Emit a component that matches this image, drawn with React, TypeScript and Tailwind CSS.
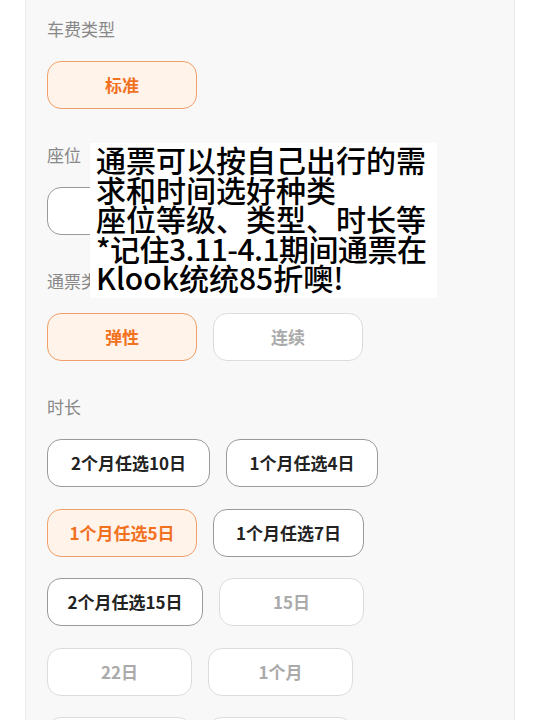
import React from "react";

type Opt = { label: string; state: "active" | "normal" | "disabled"; w: string };

const sections: { title: string; rows: Opt[][] }[] = [
  { title: "车费类型", rows: [[{ label: "标准", state: "active", w: "w-[150px]" }]] },
  { title: "座位", rows: [[{ label: "二等座", state: "normal", w: "w-[150px]" }]] },
  {
    title: "通票类型",
    rows: [
      [
        { label: "弹性", state: "active", w: "w-[150px]" },
        { label: "连续", state: "disabled", w: "w-[150px]" },
      ],
    ],
  },
  {
    title: "时长",
    rows: [
      [
        { label: "2个月任选10日", state: "normal", w: "w-[163px]" },
        { label: "1个月任选4日", state: "normal", w: "w-[152px]" },
      ],
      [
        { label: "1个月任选5日", state: "active", w: "w-[150px]" },
        { label: "1个月任选7日", state: "normal", w: "w-[151px]" },
      ],
      [
        { label: "2个月任选15日", state: "normal", w: "w-[156px]" },
        { label: "15日", state: "disabled", w: "w-[145px]" },
      ],
      [
        { label: "22日", state: "disabled", w: "w-[145px]" },
        { label: "1个月", state: "disabled", w: "w-[145px]" },
      ],
      [
        { label: "2个月", state: "disabled", w: "w-[145px]" },
        { label: "3个月", state: "disabled", w: "w-[145px]" },
      ],
    ],
  },
];

function OptionButton({ opt }: { opt: Opt }) {
  const style =
    opt.state === "active"
      ? "border-[#f0a068] bg-[#fff3ea] text-[#f2711f]"
      : opt.state === "normal"
        ? "border-[#9a9a9a] bg-white text-[#222]"
        : "border-[#dcdcdc] bg-white text-[#aaa]";
  return (
    <div
      className={`flex h-[48px] shrink-0 items-center justify-center rounded-[14px] border text-[17px] font-semibold ${opt.w} ${style}`}
    >
      {opt.label}
    </div>
  );
}

export default function App() {
  return (
    <div
      className="relative h-[720px] w-[540px] overflow-hidden bg-white"
      style={{ fontFamily: '"Noto Sans CJK SC", "Noto Sans", sans-serif' }}
    >
      {/* Panel */}
      <div className="ml-[25px] h-full w-[490px] border-x border-[#ececec] bg-[#f8f8f8] pl-[21px] pt-[19px]">
        {sections.map((section, si) => (
          <div key={si} className="mb-[36px]">
            <div className="mb-[22px] text-[17px] leading-[20px] text-[#888]">{section.title}</div>
            <div className="flex flex-col gap-[21.5px]">
              {section.rows.map((row, ri) => (
                <div key={ri} className="flex gap-[16px]">
                  {row.map((opt) => (
                    <OptionButton key={opt.label} opt={opt} />
                  ))}
                </div>
              ))}
            </div>
          </div>
        ))}
      </div>

      {/* Caption overlay */}
      <div className="absolute left-[90px] top-[143px] w-[347px] whitespace-nowrap bg-white px-[6px] pb-[5px] pt-[2px] text-[30px] font-medium leading-[29.5px] text-black">
        <div>通票可以按自己出行的需</div>
        <div>求和时间选好种类</div>
        <div>座位等级、类型、时长等</div>
        <div className="tracking-[-0.5px]">*记住3.11-4.1期间通票在</div>
        <div>Klook统统85折噢!</div>
      </div>
    </div>
  );
}
